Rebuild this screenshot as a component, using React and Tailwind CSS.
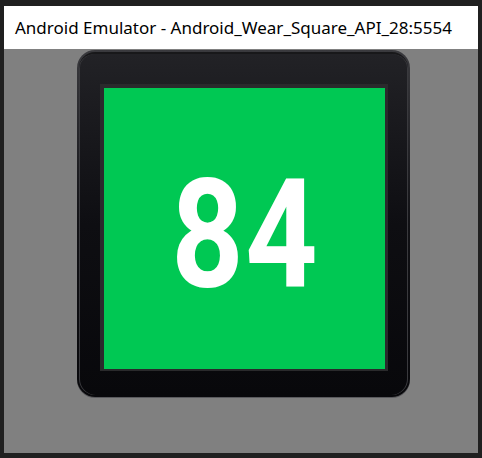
import React from 'react';

const App = () => {
  return (
    <div className="w-[482px] h-[458px] bg-[#202020] pt-[6px] px-[4px] pb-[5px] flex flex-col">
      {/* Title bar */}
      <div className="h-[43px] shrink-0 bg-white flex items-center pl-[11px]">
        <span
          className="text-[17px] text-black leading-none"
          style={{ fontFamily: '"Noto Sans", "Open Sans", sans-serif' }}
        >
          Android Emulator - Android_Wear_Square_API_28:5554
        </span>
      </div>

      {/* Emulator canvas */}
      <div className="flex-1 bg-[#808080] pl-[73px] pt-[1px]">
        {/* Watch body */}
        <div className="w-[333px] h-[347px] rounded-[18px] bg-gradient-to-b from-[#3a3a3e] via-[#121216] to-[#08080b] p-[2px] shadow-[0_1px_0_#5a5a5e]">
          <div className="w-full h-full rounded-[16px] bg-gradient-to-b from-[#222226] via-[#0e0e12] to-[#08080b] border-t-2 border-[#18181a] shadow-[inset_1px_0_0_#3a3a3e,inset_-1px_0_0_#3a3a3e] pl-[21px] pt-[30px]">
            {/* Screen */}
            <div className="w-[288px] h-[287px] bg-[#2a2a2c] pt-[4px] pl-[4px]">
              <div className="w-[281px] h-[281px] bg-[#00c853] flex items-center justify-center">
                <span
                  className="text-white font-bold text-[152px] leading-none tracking-[2px] scale-x-[0.83] mt-[12px] ml-[2px]"
                  style={{ fontFamily: 'Roboto, "Liberation Sans", sans-serif' }}
                >
                  84
                </span>
              </div>
            </div>
          </div>
        </div>
      </div>
    </div>
  );
};

export default App;
